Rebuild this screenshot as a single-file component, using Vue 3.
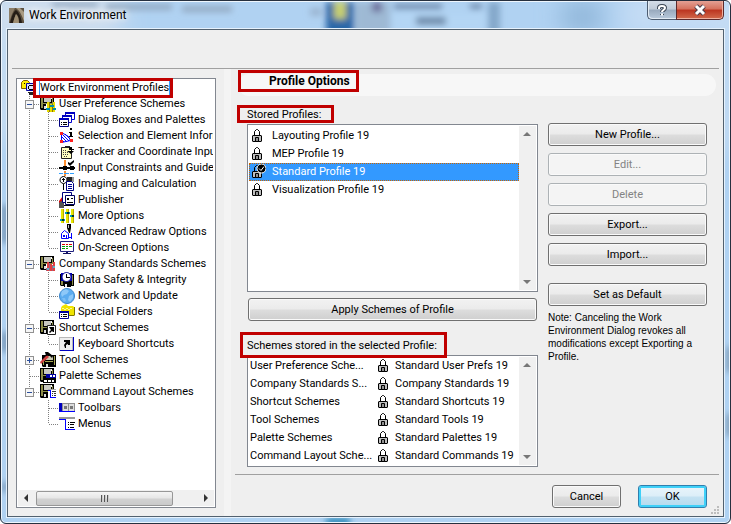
<template>
    <div class="window">
        <!-- Blurred desktop seen through the glass frame -->
        <svg class="glass" aria-hidden="true">
            <defs>
                <filter id="soft" x="-20%" y="-50%" width="140%" height="200%">
                    <feGaussianBlur stdDeviation="3" />
                </filter>
                <filter id="softer" x="-20%" y="-50%" width="140%" height="200%">
                    <feGaussianBlur stdDeviation="12" />
                </filter>
            </defs>
            <g filter="url(#softer)">
                <rect x="-10" y="-10" width="130" height="44" fill="#d3e0ee" />
                <rect x="560" y="0" width="40" height="30" fill="#8fb5d8" />
                <rect x="620" y="-10" width="120" height="44" fill="#c5dcf4" />
                <rect x="718" y="20" width="20" height="130" fill="#c9def3" />
                <rect x="-4" y="30" width="14" height="110" fill="#dbe7f2" />
            </g>
            <g filter="url(#soft)">
                <path v-for="(b, i) in blobs" :key="i" :d="b[0]" :fill="b[1]" />
            </g>
        </svg>

        <!-- Title bar -->
        <header class="titlebar">
            <svg class="app-icon" viewBox="0 0 15 15" aria-hidden="true">
                <rect width="15" height="15" fill="#5c503f" />
                <path d="M0 0h6L3 6L0 15z" fill="#8d7f69" />
                <path d="M8 1C11 3 13 8 15 13V4L11 0H7z" fill="#a89a82" />
                <path d="M1 15C3 8 4 4 7 2C10 4 12 9 13 15H10C10 10 9 7 7 6C6 8 5 11 4 15z" fill="#241d16" />
                <path d="M4 15C5 11 6 8 7 6C9 8 10 11 10 15z" fill="#9d8d72" />
            </svg>
            <h1 class="title">Work Environment</h1>
            <div class="caption-buttons">
                <button class="caption help" aria-label="Help">
                    <svg viewBox="0 0 12 13" width="12" height="13">
                        <path d="M3 5V4Q3 2 6 2T9 4Q9 5 7.500 6T6 8M6 10v1" fill="none" stroke="#3c4756" stroke-width="4" />
                        <path d="M3 5V4Q3 2 6 2T9 4Q9 5 7.500 6T6 8M6 9.500v2" fill="none" stroke="#fff" stroke-width="2" />
                    </svg>
                </button>
                <button class="caption close" aria-label="Close">
                    <svg viewBox="0 0 14 12" width="14" height="12">
                        <path d="M3 2L11 10M11 2L3 10" fill="none" stroke="#4b3b49" stroke-width="5" />
                        <path d="M3 2L11 10M11 2L3 10" fill="none" stroke="#fff" stroke-width="3" />
                    </svg>
                </button>
            </div>
        </header>

        <main class="client">
            <div class="top-space"></div>

            <div class="body">
                <!-- Scheme tree -->
                <nav class="tree">
                    <ul class="tree-rows">
                        <li v-for="row in tree" :key="row.label" class="tree-row" :class="{ root: row.level === 0 }">
                            <svg v-for="(g, i) in row.guides" :key="i" class="guide" viewBox="0 0 19 16" aria-hidden="true">
                                <path :d="guides[g]" fill="none" stroke="#808080" stroke-dasharray="1 1" />
                                <g v-if="i === 0 && row.toggle">
                                    <rect x="4.500" y="4.500" width="8" height="8" rx="1" fill="#f6f6f6" stroke="#919191" />
                                    <path :d="row.toggle === 'open' ? 'M6 8.500h5' : 'M6 8.500h5M8.500 6v5'" stroke="#2b4f9c" />
                                </g>
                            </svg>
                            <svg class="icon" viewBox="0 0 16 16" aria-hidden="true">
                                <path v-for="(p, i) in icons[row.icon]" :key="i" :d="p[0]" :fill="p[1]" :stroke="p[2] || 'none'" />
                            </svg>
                            <a href="#" class="tree-label" :class="{ marked: row.level === 0 }">{{ row.label }}</a>
                        </li>
                    </ul>
                    <div class="hscroll">
                        <svg class="arrow" viewBox="0 0 16 16"><path d="M10 4v8L6 8z" fill="#333" /></svg>
                        <div class="thumb"><i></i><i></i><i></i></div>
                        <svg class="arrow right" viewBox="0 0 16 16"><path d="M6 4v8l4-4z" fill="#333" /></svg>
                    </div>
                </nav>

                <div class="splitter"></div>

                <!-- Profile options -->
                <section class="pane">
                    <div class="banner"><h2 class="marked">Profile Options</h2></div>

                    <div class="columns">
                        <div class="lists">
                            <p class="caption-text"><span class="marked stored">Stored Profiles:</span></p>
                            <div class="listbox profiles">
                                <ul class="items">
                                    <li
                                        v-for="profile in profiles"
                                        :key="profile"
                                        class="item"
                                        :class="{ selected: profile === selected }"
                                        @click="selected = profile"
                                    >
                                        <svg class="lock" viewBox="0 0 16 16" aria-hidden="true">
                                            <path v-for="(p, i) in icons.lock" :key="i" :d="p[0]" :fill="p[1]" :stroke="p[2] || 'none'" />
                                            <g v-if="profile === 'Standard Profile 19'">
                                                <circle cx="11.500" cy="4.500" r="4.500" fill="#000" stroke="#fff" />
                                                <path d="M9 4.500l2 2 3-4" fill="none" stroke="#fff" />
                                            </g>
                                        </svg>
                                        <span>{{ profile }}</span>
                                    </li>
                                </ul>
                                <div class="vscroll">
                                    <svg class="arrow" viewBox="0 0 16 16"><path d="M4 10h8L8 6z" fill="#777" /></svg>
                                    <svg class="arrow" viewBox="0 0 16 16"><path d="M4 6h8l-4 4z" fill="#777" /></svg>
                                </div>
                            </div>

                            <button class="btn apply">Apply Schemes of Profile</button>

                            <p class="caption-text"><span class="marked schemes">Schemes stored in the selected Profile:</span></p>
                            <div class="listbox">
                                <table class="scheme-table">
                                    <tbody>
                                        <tr v-for="s in schemes" :key="s[0]">
                                            <td class="scheme-kind">{{ s[0] }}</td>
                                            <td class="scheme-name">
                                                <div class="scheme-cell">
                                                    <svg class="lock" viewBox="0 0 16 16" aria-hidden="true">
                                                        <path v-for="(p, i) in icons.lock" :key="i" :d="p[0]" :fill="p[1]" :stroke="p[2] || 'none'" />
                                                    </svg>
                                                    <span>{{ s[1] }}</span>
                                                </div>
                                            </td>
                                        </tr>
                                    </tbody>
                                </table>
                                <div class="vscroll">
                                    <svg class="arrow" viewBox="0 0 16 16"><path d="M4 10h8L8 6z" fill="#777" /></svg>
                                    <svg class="arrow" viewBox="0 0 16 16"><path d="M4 6h8l-4 4z" fill="#777" /></svg>
                                </div>
                            </div>
                        </div>

                        <div class="actions">
                            <button class="btn">New Profile...</button>
                            <button class="btn" disabled>Edit...</button>
                            <button class="btn" disabled>Delete</button>
                            <button class="btn">Export...</button>
                            <button class="btn">Import...</button>
                            <button class="btn default">Set as Default</button>
                            <p class="note">
                                Note: Canceling the Work Environment Dialog revokes all modifications except Exporting a Profile.
                            </p>
                        </div>
                    </div>

                    <footer class="footer">
                        <button class="btn">Cancel</button>
                        <button class="btn primary">OK</button>
                        <svg class="grip" viewBox="0 0 8 8" aria-hidden="true">
                            <path d="M6 0h2v2h-2zM3 3h2v2h-2zM6 3h2v2h-2zM0 6h2v2h-2zM3 6h2v2h-2zM6 6h2v2h-2z" fill="#bdbdbd" />
                        </svg>
                    </footer>
                </section>
            </div>
        </main>
    </div>
</template>

<script setup>
import { ref } from 'vue'

const selected = ref('Standard Profile 19')

const profiles = ['Layouting Profile 19', 'MEP Profile 19', 'Standard Profile 19', 'Visualization Profile 19']

const schemes = [
    ['User Preference Sche...', 'Standard User Prefs 19'],
    ['Company Standards S...', 'Company Standards 19'],
    ['Shortcut Schemes', 'Standard Shortcuts 19'],
    ['Tool Schemes', 'Standard Tools 19'],
    ['Palette Schemes', 'Standard Palettes 19'],
    ['Command Layout Sche...', 'Standard Commands 19']
]

// Dotted connector lines, one 19x16 cell each
const guides = {
    line: 'M8.500 0v16',
    tee: 'M8.500 0v16M9 8.500h10',
    end: 'M8.500 0v8M9 8.500h10',
    blank: ''
}

const tree = [
    { level: 0, label: 'Work Environment Profiles', icon: 'root', guides: [] },
    { level: 1, label: 'User Preference Schemes', icon: 'userScheme', guides: ['tee'], toggle: 'open' },
    { level: 2, label: 'Dialog Boxes and Palettes', icon: 'dialogs', guides: ['line', 'tee'] },
    { level: 2, label: 'Selection and Element Inform', icon: 'selection', guides: ['line', 'tee'] },
    { level: 2, label: 'Tracker and Coordinate Inpu', icon: 'tracker', guides: ['line', 'tee'] },
    { level: 2, label: 'Input Constraints and Guide', icon: 'constraints', guides: ['line', 'tee'] },
    { level: 2, label: 'Imaging and Calculation', icon: 'imaging', guides: ['line', 'tee'] },
    { level: 2, label: 'Publisher', icon: 'publisher', guides: ['line', 'tee'] },
    { level: 2, label: 'More Options', icon: 'more', guides: ['line', 'tee'] },
    { level: 2, label: 'Advanced Redraw Options', icon: 'redraw', guides: ['line', 'tee'] },
    { level: 2, label: 'On-Screen Options', icon: 'screen', guides: ['line', 'end'] },
    { level: 1, label: 'Company Standards Schemes', icon: 'companyScheme', guides: ['tee'], toggle: 'open' },
    { level: 2, label: 'Data Safety & Integrity', icon: 'safety', guides: ['line', 'tee'] },
    { level: 2, label: 'Network and Update', icon: 'network', guides: ['line', 'tee'] },
    { level: 2, label: 'Special Folders', icon: 'folders', guides: ['line', 'end'] },
    { level: 1, label: 'Shortcut Schemes', icon: 'shortcutScheme', guides: ['tee'], toggle: 'open' },
    { level: 2, label: 'Keyboard Shortcuts', icon: 'keyboard', guides: ['line', 'end'] },
    { level: 1, label: 'Tool Schemes', icon: 'toolScheme', guides: ['tee'], toggle: 'closed' },
    { level: 1, label: 'Palette Schemes', icon: 'paletteScheme', guides: ['tee'] },
    { level: 1, label: 'Command Layout Schemes', icon: 'commandScheme', guides: ['end'], toggle: 'open' },
    { level: 2, label: 'Toolbars', icon: 'toolbars', guides: ['blank', 'tee'] },
    { level: 2, label: 'Menus', icon: 'menus', guides: ['blank', 'end'] }
]

// Icons: [path, fill, stroke] on a 16x16 grid
const disk = [
    ['M0 0h14v14H1l-1-1z', '#000'],
    ['M1 1h2v11H1zM12 2h1v10h-1zM3 7h9v1H3z', '#8c8c48'],
    ['M4 1h7v5H4z', '#c8c8c0'],
    ['M11 1h1v2h-1z', '#fff'],
    ['M3 9h9v4H3z', '#000'],
    ['M4 10h2v3H4z', '#ddd']
]

const icons = {
    lock: [
        ['M4.500 8V3.500l2-2h1l2 2V8', 'none', '#000'],
        ['M3 7h8l1 1v5l-1 1H3l-1-1V8z', '#000'],
        ['M3 8h8v5H3z', '#c0c0c0'],
        ['M5.500 9.500h3v4h-3z', '#909090', '#000']
    ],
    root: [
        ['M0.500 2.500l2-2h4l2 2v6h-8z', '#ffee00', '#806000'],
        ['M3 3h1v1H3zM5 5h2v1H5z', '#000'],
        ['M5.500 3.500h9v7h-9z', '#dce4ff', '#0000a0'],
        ['M8 5h4v1H8zM7 6h1v3H7zM8 9h4v1H8z', '#000'],
        ['M7 12h6v1H7zM8 13h4v2H8z', '#222']
    ],
    userScheme: [
        ...disk,
        ['M6 8h10v6H6z', '#fff'],
        ['M7 6h2v10H7zM10 8h2v8h-2zM13 6h2v10h-2z', '#e8dc00'],
        ['M9 6h1v10H9zM12 8h1v8h-1z', '#907800'],
        ['M6 12h4v2H6zM10 9h4v2h-4zM13 12h3v2h-3z', '#0090b0']
    ],
    dialogs: [
        ['M6.500 0.500h9v7h-9z', '#fff', '#0000d0'],
        ['M3.500 3.500h9v7h-9z', '#fff', '#0000d0'],
        ['M0.500 6.500h9v8h-9z', '#fff', '#000080'],
        ['M6 0h10v2H6zM3 3h10v2H3zM0 6h10v2H0z', '#0000c0'],
        ['M2 10h1v1H2zM4 10h4v1H4zM2 12h1v1H2zM4 12h4v1H4z', '#000']
    ],
    selection: [
        ['M2.500 4.500l7 4 2 4-9 2z', 'none', '#0000ff'],
        ['M3 6l7 7M3 9l5 5M6 6l5 5M3 12l2 2', 'none', '#0000ff'],
        ['M1 4h3v3H1zM1 12h3v3H1zM11 11h3v3h-3z', '#ff2020'],
        ['M11 0h2v2h-2zM10 4h3v4h1v1h-4V8h1V5h-1z', '#000']
    ],
    tracker: [
        ['M2.500 3.500h10v11h-10z', '#ffffc0', '#222'],
        ['M6 2h5v2H6z', '#222'],
        ['M4 6h1v1H4zM6 6h1v1H6zM4 8h1v1H4zM6 8h1v1H6zM8 8h1v1H8zM4 10h1v1H4zM6 10h1v1H6zM8 10h1v1H8zM5 12h1v1H5zM7 12h1v1H7z', '#444'],
        ['M10 3h3v2h2v1h-2v3h-1V6h-2zM8 7h7l-3 3z', '#000']
    ],
    constraints: [
        ['M5 0h2v6H5zM5 11h2v5H5z', '#ff9030'],
        ['M0 7h16v2H0zM4 6h4v4H4zM11 6h4v4h-4z', '#000'],
        ['M0 13h4v1H0zM5 13h5v1H5zM11 13h4v1h-4z', '#30a0ff'],
        ['M9 2l2 1 4-3v2l-4 4-2-2z', '#000']
    ],
    imaging: [
        ['M4.500 0.500a3.500 3.500 0 1 0 0.010 0z', '#fff', '#000'],
        ['M4 2h1v1h1v1H5v2H4V4H3V3h1zM4 8h1v6H4z', '#000'],
        ['M8 1h5v6H8z', '#222'],
        ['M13 1h2v5h-2z', '#999'],
        ['M7.500 5.500h5l2 2v7h-7z', '#fff', '#000080'],
        ['M9 8h4v1H9zM9 10h4v1H9zM9 12h4v1H9z', '#000090']
    ],
    publisher: [
        ['M0 9l4-5 3 4v3H0z', '#e00000'],
        ['M0 11l2-2 3 1v6H0z', '#555'],
        ['M3.500 0.500h9v10h-9z', '#fff', '#000080'],
        ['M6.500 3.500h9v9h-9z', '#fff', '#000060'],
        ['M5 13h10v1H5z', '#000'],
        ['M8 6h2v2H8zM12 6h2v1h-2zM8 10h6v1H8z', '#000']
    ],
    more: [
        ['M2 1h2v14H2zM7 1h2v14H7zM12 1h2v14h-2z', '#e8e800'],
        ['M4 1h1v14H4zM9 1h1v14H9zM14 1h1v14h-1z', '#b8a800'],
        ['M1 11h5v2H1zM6 4h5v2H6zM11 7h4v2h-4z', '#00a0a8'],
        ['M3 11h2v2H3zM8 4h2v2H8zM13 7h2v2h-2z', '#003030']
    ],
    redraw: [
        ['M2.500 9.500L5.500 6.500l4 3v5h-7z', '#fff', '#0000ff'],
        ['M4 11h2v2H4zM7 11h1v3H7z', '#0000ff'],
        ['M8 0h4v4l-1 5h-1L8 4z', '#000'],
        ['M9 1h1v3H9z', '#bbb'],
        ['M10 13h3v1h-3zM12 9h1v6h-1z', '#0000ff']
    ],
    screen: [
        ['M1.500 1.500h13v10h-13z', '#fff', '#202080'],
        ['M3 4h3v1H3zM7 4h2v1H7zM10 4h3v1h-3z', '#e00000'],
        ['M3 6h3v1H3zM7 6h2v1H7zM10 6h3v1h-3zM3 8h3v1H3zM7 8h2v1H7z', '#00a000'],
        ['M7 12h2v1H7zM4 13h8v1H4z', '#101060']
    ],
    companyScheme: [
        ...disk,
        ['M6 8h10v6H6z', '#fff'],
        ['M7 6h2v9H7zM10 8h2v7h-2zM13 6h2v9h-2z', '#e04040'],
        ['M6 12h1v3H6zM9 7h1v8H9zM12 9h1v6h-1z', '#a06080'],
        ['M7 12h2v2H7zM13 10h2v2h-2z', '#60b0c0']
    ],
    safety: [
        ['M1 2h14v12H2l-1-1z', '#000'],
        ['M2 9h2v4H2zM13 3h1v10h-1z', '#8c8c48'],
        ['M2 1h11v8H2z', '#0000b0'],
        ['M7.500 0.500a4.500 4.500 0 1 0 0.010 0z', '#fff', '#000090'],
        ['M7 2h1v3h3v1H7z', '#000'],
        ['M5 11h7v4H5z', '#000'],
        ['M6 12h2v3H6z', '#eee']
    ],
    network: [
        ['M8 0.500a7.500 7.500 0 1 0 0.010 0z', '#5cacf0', '#3f88cc'],
        ['M3 3l4-2 3 2-2 3-3 1-2 2-1-3zM10 8l4-2 0 4-3 4-2-2z', '#8ec8f8'],
        ['M3 10l3 0 1 3-2 1z', '#7cbef4']
    ],
    folders: [
        ['M2 4l1-2 4-2 2 2h5l1 1v8H2z', '#f0e400'],
        ['M3 4h2v1H3zM7 4h2v1H7zM11 4h2v1h-2zM5 5h2v1H5zM9 5h2v1H9z', '#fff79a'],
        ['M15 3h1v8l-1 1h-5v-1h5z', '#807800'],
        ['M0.500 7.500h9v7h-9z', '#fff', '#000090'],
        ['M0 7h10v2H0z', '#0000a0'],
        ['M2 10h1v1H2zM4 10h4v1H4zM2 12h1v1H2zM4 12h4v1H4z', '#000']
    ],
    shortcutScheme: [
        ...disk,
        ['M7.500 5.500h8v9h-8z', '#fff', '#222'],
        ['M9 7h5v5h-1l-1-1-2 2-1-1 2-2z', '#000']
    ],
    keyboard: [
        ['M0 1h15v14H0z', '#b8b8b8'],
        ['M1 2h12v12H1z', '#eee'],
        ['M14 1h1v14H1v-1h13z', '#0000c0'],
        ['M5 4h6v5H9V8L7 9v3H6l-1-3 2-3H5z', '#000']
    ],
    toolScheme: [
        ['M2 3h14v12H3l-1-1z', '#000'],
        ['M3 8h1v5H3zM14 4h1v9h-1zM5 9h8v1H5z', '#a8a850'],
        ['M6 4h7v4H6z', '#c8c8b0'],
        ['M6 12h2v3H6z', '#ddd'],
        ['M0 10l7-7 2 2-8 7z', '#d04040'],
        ['M5 0h3l5 4-1 2-3-3-3 1z', '#000']
    ],
    paletteScheme: [
        ...disk,
        ['M6 6h10v4H6z', '#0000a0'],
        ['M10 7h2v2h-2zM13 7h2v2h-2z', '#fff'],
        ['M3 10h13v5H3z', '#000'],
        ['M4 12h3v2H4zM8 12h3v2H8zM12 12h2v2h-2z', '#fff']
    ],
    commandScheme: [
        ...disk,
        ['M8 5h8v10H8z', '#fff'],
        ['M8 5h8v1H8z', '#aaa'],
        ['M8 6h3v1H8zM10 7h1v7h-1zM10 13h6v1h-6z', '#0000ff'],
        ['M12 7h4v1h-4zM12 9h1v1h-1zM14 9h2v1h-2zM12 11h1v1h-1zM14 11h2v1h-2z', '#333']
    ],
    toolbars: [
        ['M0 3h16v9H0z', '#909090'],
        ['M0 3h3v8H0z', '#0000c0'],
        ['M4 4h5v7H4zM10 4h5v7h-5z', '#ddd'],
        ['M5 6h3v3H5zM11 6h3v3h-3z', '#777'],
        ['M0 11h16v1H0z', '#0000ff']
    ],
    menus: [
        ['M0 1h16v2H0z', '#999'],
        ['M0 3h7v1H0zM6 4h1v10H6zM6 13h10v1H6z', '#0000ff'],
        ['M7 4h9v9H7z', '#fff'],
        ['M9 6h1v1H9zM11 6h5v1h-5zM9 8h1v1H9zM11 8h4v1h-4zM9 11h1v1H9zM11 11h4v1h-4z', '#000']
    ]
}

const blobs = [
    ['M50 0h46v5H50zM104 2h66v6h-66zM180 4h50v6h-50z', '#93a9c1'],
    ['M308 6h12v8h-12z', '#9bb6d2'],
    ['M324 0h28v34h-28z', '#2b68a8'],
    ['M332 0h12v17h-12z', '#c8d070'],
    ['M354 0h34v34h-34z', '#9eb9d4'],
    ['M370 0h10v10h-10z', '#6f6f9c'],
    ['M392 2h48v5h-48zM468 2h12v5h-12z', '#6c86a8'],
    ['M392 12h92v16h-92z', '#b4d6f4'],
    ['M414 15h30v8h-30z', '#6c88a8'],
    ['M486 0h12v34h-12z', '#84a8ca'],
    ['M0 203h6v38H0zM0 330h6v20H0zM0 480h5v10H0z', '#6f8faf'],
    ['M725 345h6v25h-6zM725 412h6v22h-6z', '#7894ae'],
    ['M324 516h24v8h-24z', '#2c88b8']
]
</script>

<style>
body {
    margin: 0;
}
</style>

<style scoped>
.window {
    position: relative;
    display: flex;
    flex-direction: column;
    box-sizing: border-box;
    min-height: 100vh;
    padding: 0 6px 6px;
    border: 1px solid #26303f;
    border-radius: 6px;
    background: #b0d2f2;
    box-shadow: inset 0 0 0 1px #eef6fd;
    overflow: hidden;
    font-family: Roboto, "Liberation Sans", sans-serif;
    font-size: 11px;
    line-height: 14px;
    color: #000;
}

.glass {
    position: absolute;
    inset: 1px;
    width: calc(100% - 2px);
    height: calc(100% - 2px);
}

ul {
    margin: 0;
    padding: 0;
    list-style: none;
}

button {
    font: inherit;
    color: inherit;
}

/* Title bar */
.titlebar {
    position: relative;
    display: flex;
    align-items: flex-start;
    height: 28px;
}

.app-icon {
    width: 15px;
    height: 15px;
    margin: 7px 5px 0 2px;
}

.title {
    flex: 1;
    margin: 7px 0 0;
    font-size: 12px;
    font-weight: 400;
    line-height: 14px;
    text-shadow: 0 0 6px #fff, 0 0 8px #fff;
}

.caption-buttons {
    display: flex;
}

.caption {
    display: flex;
    align-items: center;
    justify-content: center;
    height: 19px;
    padding: 0;
    border: 1px solid #4c5c70;
    border-top: 0;
}

.help {
    width: 29px;
    border-right: 0;
    border-radius: 0 0 0 5px;
    background: linear-gradient(#d4dde8 0, #c0cbd8 45%, #98a9bd 50%, #b9cadc 100%);
    box-shadow: inset 1px -1px 0 #e2ebf4;
}

.close {
    width: 48px;
    border-color: #5c2a2c;
    border-radius: 0 0 5px 0;
    background: linear-gradient(#e4a094 0, #d5705c 45%, #bb3420 50%, #d26a4c 100%);
    box-shadow: inset 0 -1px 0 #eeb0a0, inset -1px 0 0 #eeb0a0;
}

/* Client area */
.client {
    position: relative;
    flex: 1;
    display: flex;
    flex-direction: column;
    border: 1px solid #52616f;
    outline: 1px solid #e6f2fd;
    background: #efefef;
}

.top-space {
    height: 38px;
    margin: 0 4px;
    border-bottom: 1px solid #a0a0a0;
}

.body {
    flex: 1;
    display: grid;
    grid-template-columns: 200px 7px minmax(0, 1fr);
    column-gap: 8px;
    padding-left: 8px;
}

/* Tree */
.tree {
    display: flex;
    flex-direction: column;
    margin: 9px 0 8px;
    border: 1px solid #828790;
    background: #fff;
}

.tree-rows {
    flex: 1;
    padding: 1px 2px 0 4px;
}

.tree-row {
    display: flex;
    align-items: center;
    height: 16px;
    overflow: hidden;
}

.tree-row.root {
    overflow: visible;
}

.guide {
    flex: none;
    width: 19px;
    height: 16px;
    shape-rendering: crispEdges;
}

.icon {
    flex: none;
    width: 16px;
    height: 16px;
    margin-right: 3px;
}

.tree-label {
    color: #000;
    text-decoration: none;
    white-space: nowrap;
}

.root .tree-label {
    outline: 1px solid #3399ff;
}

.hscroll {
    display: flex;
    align-items: center;
    height: 16px;
    margin: 0 1px 1px;
    background: #f0f0f0;
}

.arrow {
    flex: none;
    width: 16px;
    height: 16px;
}

.thumb {
    display: flex;
    align-items: center;
    justify-content: center;
    gap: 1px;
    box-sizing: border-box;
    width: 70%;
    height: 15px;
    margin-left: 2px;
    border: 1px solid #979797;
    border-radius: 2px;
    background: linear-gradient(#f4f4f4 0, #e6e6e6 48%, #d2d2d2 52%, #cacaca 100%);
}

.thumb i {
    width: 2px;
    height: 7px;
    background: linear-gradient(90deg, #555 50%, #ccc 50%);
}

.arrow.right {
    margin-left: auto;
}

.splitter {
    background: #f4f4f4;
}

/* Red highlight frames */
.marked {
    position: relative;
}

.marked::after {
    content: "";
    position: absolute;
    inset: -3px -4px -3px -7px;
    z-index: 1;
    border: 3px solid #c00000;
    pointer-events: none;
}

/* Right pane */
.splitter + .pane {
    margin-left: -8px;
}

.pane {
    display: flex;
    flex-direction: column;
}

.banner {
    height: 22px;
    margin: 5px 7px 0;
    border-radius: 11px;
    background: #f7f7f7;
}

.banner h2 {
    display: inline-block;
    margin: 0 0 0 31px;
    font-size: 12px;
    font-weight: 700;
    line-height: 14px;
    vertical-align: top;
}

.banner .marked::after {
    inset: -4px -9px -4px -31px;
}

.columns {
    flex: 1;
    display: grid;
    grid-template-columns: minmax(0, 1fr) 159px;
    column-gap: 10px;
    padding: 12px 16px 7px;
}

.lists {
    display: flex;
    flex-direction: column;
}

.caption-text {
    margin: 0 0 2px;
}

.stored::after {
    inset: -3px -13px -2px -10px;
}

.schemes::after {
    inset: -7px -10px -6px -7px;
}

.listbox {
    display: flex;
    padding: 1px;
    border: 1px solid #828790;
    background: #fff;
}

.profiles {
    flex: 1;
    min-height: 163px;
}

.items {
    flex: 1;
    padding-top: 1px;
}

.item {
    display: flex;
    align-items: center;
    box-sizing: border-box;
    height: 18px;
    border: 1px solid transparent;
}

.item.selected {
    border: 1px dotted #cc6600;
    background: #3399ff;
    color: #fff;
}

.lock {
    flex: none;
    width: 16px;
    height: 16px;
}

.item .lock {
    margin-right: 6px;
}

.vscroll {
    display: flex;
    flex-direction: column;
    justify-content: space-between;
    width: 17px;
    background: #f0f0f0;
}

.scheme-table {
    flex: 1;
    border-collapse: collapse;
}

.scheme-table td {
    height: 18px;
    padding: 0;
    white-space: nowrap;
}

.scheme-table .scheme-kind {
    width: 126px;
    padding-left: 1px;
}

.scheme-cell {
    display: flex;
    align-items: center;
    gap: 3px;
}

/* Buttons */
.btn {
    height: 23px;
    padding: 0;
    border: 1px solid #707070;
    border-radius: 3px;
    background: linear-gradient(#f2f2f2 0, #ebebeb 48%, #dddddd 52%, #cfcfcf 100%);
    box-shadow: inset 0 0 0 1px #fafafa;
}

.btn:disabled {
    border-color: #adb2b5;
    background: #f4f4f4;
    color: #838383;
}

.btn.primary {
    border-color: #2f7fae;
    background: linear-gradient(#eaf5fb 0, #dceef8 48%, #c4e2f2 52%, #b4daee 100%);
    box-shadow: inset 0 0 0 2px #3fd0f8;
}

.apply {
    margin: 6px 1px 18px;
}

.actions {
    display: flex;
    flex-direction: column;
    gap: 7px;
    padding-top: 15px;
}

.default {
    margin-top: 10px;
}

.note {
    margin: -2px 0 0;
    font-family: "Liberation Sans", Arial, sans-serif;
    font-size: 10px;
    line-height: 13px;
}

.footer {
    position: relative;
    display: flex;
    justify-content: flex-end;
    gap: 17px;
    margin: 0 4px;
    padding: 10px 12px 8px;
    border-top: 1px solid #a0a0a0;
}

.footer .btn {
    width: 69px;
}

.grip {
    position: absolute;
    right: 0;
    bottom: 2px;
    width: 8px;
    height: 8px;
}
</style>
